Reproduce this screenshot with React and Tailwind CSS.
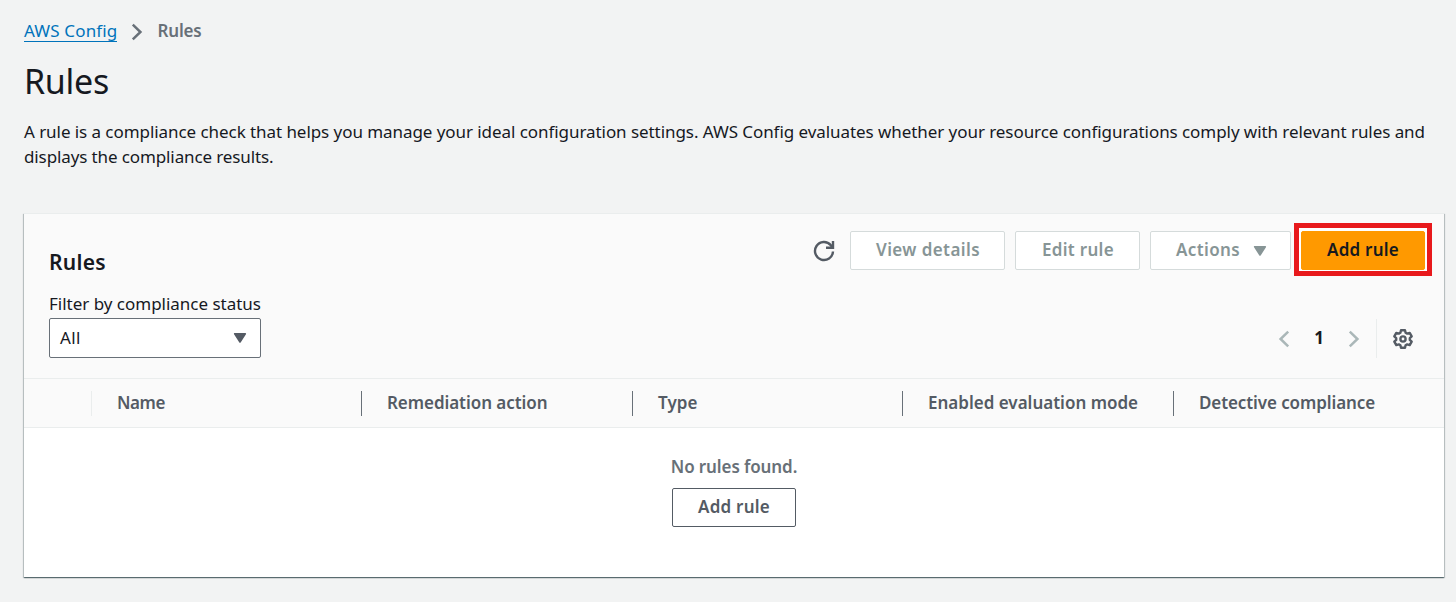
const buttonBase =
  "flex h-[39px] items-center justify-center rounded-[2px] border pb-0.5 font-semibold";

const disabled = "border-[#d5dbdb] bg-white text-[#879596]";

function Caret({ className }) {
  return (
    <svg className={className} width="14" height="12" viewBox="0 0 14 12" aria-hidden="true">
      <path d="M1.7 1.7h10.6L7 10z" fill="currentColor" stroke="currentColor" strokeWidth="1.6" strokeLinejoin="round" />
    </svg>
  );
}

function Chevron({ left, className }) {
  return (
    <svg className={className} width="12" height="18" viewBox="0 0 12 18" fill="none" stroke="currentColor" aria-hidden="true">
      <path d={left ? "M10.2 1.7 2.6 9l7.6 7.3" : "M1.8 1.7 9.4 9l-7.6 7.3"} strokeWidth="2.5" />
    </svg>
  );
}

function RefreshIcon() {
  return (
    <svg width="22" height="22" viewBox="0 0 22 22" fill="none" stroke="#545b64" strokeWidth="2.4" aria-hidden="true">
      <path d="M20 11.5a9 9 0 1 1-2.2-6.4L19 7.3" />
      <path d="M20 1v6.8H13" />
    </svg>
  );
}

function GearIcon() {
  return (
    <svg width="22" height="22" viewBox="0 0 22 22" fill="none" stroke="#545b64" strokeWidth="2.4" strokeLinejoin="round" aria-hidden="true">
      <path d="M9 2.2h4l.6 2.5 1.6.9 2.5-.7 2 3.4-1.9 1.8v1.8l1.9 1.8-2 3.4-2.5-.7-1.6.9-.6 2.5H9l-.6-2.5-1.6-.9-2.5.7-2-3.4 1.9-1.8v-1.8L2.3 8.3l2-3.4 2.5.7 1.6-.9z" />
      <circle cx="11" cy="11" r="2.6" />
    </svg>
  );
}

const columns = [
  { label: "Name", tracking: "tracking-[-0.42px]", divider: "bg-[#eaeded]" },
  { label: "Remediation action", tracking: "tracking-[-0.06px]", divider: "bg-[#687078]" },
  { label: "Type", tracking: "tracking-[0.07px]", divider: "bg-[#687078]" },
  { label: "Enabled evaluation mode", tracking: "tracking-normal", divider: "bg-[#687078]" },
  { label: "Detective compliance", tracking: "tracking-[-0.1px]", divider: "bg-[#687078]" },
];

export default function App() {
  return (
    <div className="h-[602px] overflow-hidden bg-[#f2f3f3] pr-3 pl-6 font-['Noto_Sans',sans-serif] text-[17px] leading-[25px] text-[#16191f]">
      <nav className="flex h-[43px] items-start pt-[18px]">
        <a href="#" className="h-6 border-b border-[#0073bb] tracking-[0.15px] text-[#0073bb]">AWS Config</a>
        <Chevron className="mt-[5px] ml-[14px] text-[#687078]" />
        <span className="ml-[14px] font-semibold tracking-[-0.18px] text-[#687078]">Rules</span>
      </nav>

      <h1 className="mt-4 text-[34px] leading-[45px] tracking-[-0.28px]">Rules</h1>
      <p className="mt-[15px] whitespace-nowrap tracking-[-0.062px]">
        A rule is a compliance check that helps you manage your ideal configuration settings. AWS Config evaluates whether your resource configurations comply with relevant rules and
        <br />
        <span className="tracking-[-0.114px]">displays the compliance results.</span>
      </p>

      <section className="mt-[44px] flex h-[364px] w-[1420px] flex-col border-t border-[#eaeded] bg-white shadow-[0_1px_1px_0_rgba(0,28,36,0.45),1px_1px_1px_0_rgba(0,28,36,0.18),-1px_1px_1px_0_rgba(0,28,36,0.18)]">
        <header className="h-[165px] border-b border-[#eaeded] bg-[#fafafa] pt-[17px] pr-[19px] pl-[25px]">
          <div className="flex justify-between">
            <h2 className="pt-[18px] text-[21px] leading-[27px] font-semibold tracking-[0.3px]">Rules</h2>
            <div className="flex h-[39px] items-center gap-[10px]">
              <button className="mr-[5px]" aria-label="Refresh"><RefreshIcon /></button>
              <button className={`${buttonBase} ${disabled} w-[155px] pl-px tracking-[0.4px]`}>View details</button>
              <button className={`${buttonBase} ${disabled} w-[125px] pl-px tracking-[0.3px]`}>Edit rule</button>
              <button className={`${buttonBase} ${disabled} w-[141px] gap-[13px] pl-0.5 tracking-[0.37px]`}>
                Actions
                <Caret className="mt-[3px]" />
              </button>
              <div className="relative">
                <div className="pointer-events-none absolute -top-2 -left-[7px] h-[53px] w-[138px] border-5 border-[#e8191c] bg-white" />
                <button className={`${buttonBase} relative w-[124px] border-[#ff9900] bg-[#ff9900] tracking-[0.24px]`}>Add rule</button>
              </div>
            </div>
          </div>
          <div className="flex justify-between">
            <div>
              <label className="block pt-[15px] tracking-[-0.013px]">Filter by compliance status</label>
              <div className="mt-[2px] flex h-10 w-[212px] items-center justify-between rounded-[2px] border border-[#687078] bg-white pr-[13px] pl-[10px]">
                <span className="pb-0.5 tracking-[0.4px]">All</span>
                <Caret className="text-[#545b64]" />
              </div>
            </div>
            <div className="mt-[43px] flex h-[39px] items-center pr-[11px]">
              <Chevron left className="text-[#aab7b8]" />
              <span className="w-[58px] pb-0.5 text-center font-bold">1</span>
              <Chevron className="text-[#aab7b8]" />
              <span className="ml-4 h-[39px] w-px bg-[#eaeded]" />
              <button className="ml-[15px]" aria-label="Preferences"><GearIcon /></button>
            </div>
          </div>
        </header>

        <div className="grid h-[49px] grid-cols-[67px_270px_271px_270px_271px_271px] items-center border-b border-[#eaeded] bg-[#fafafa] font-semibold text-[#545b64]">
          <span />
          {columns.map((c) => (
            <div key={c.label} className="flex items-center gap-[25px]">
              <span className={`h-[25px] w-px ${c.divider}`} />
              <span className={`pb-0.5 ${c.tracking}`}>{c.label}</span>
            </div>
          ))}
        </div>

        <div className="flex flex-col items-center pt-[26px]">
          <p className="font-semibold tracking-[-0.1px] text-[#687078]">No rules found.</p>
          <button className={`${buttonBase} mt-[9px] w-[124px] border-[#545b64] bg-white tracking-[0.24px] text-[#545b64]`}>Add rule</button>
        </div>
      </section>
    </div>
  );
}
